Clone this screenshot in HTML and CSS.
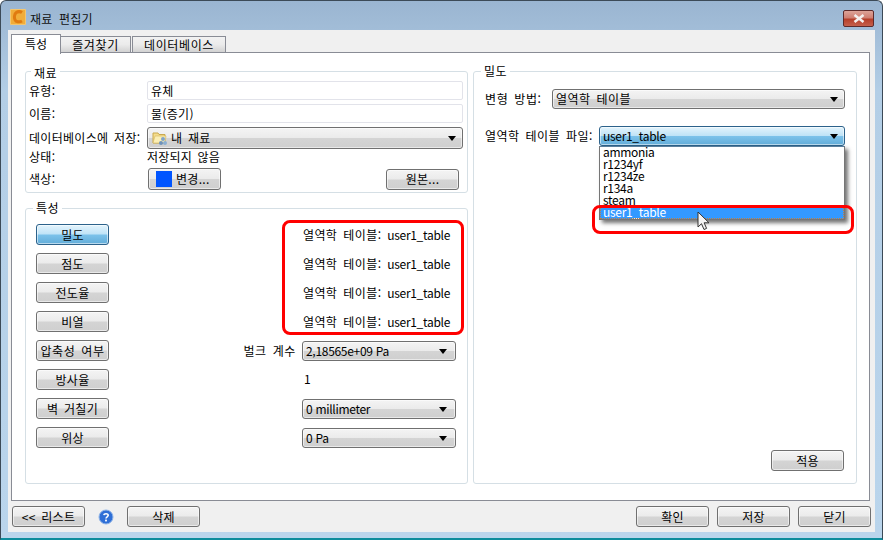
FILE: index.html
```html
<!DOCTYPE html>
<html lang="ko">
<head>
<meta charset="utf-8">
<title>재료 편집기</title>
<link rel="stylesheet" href="styles.css">
</head>
<body>
<div class="window">
  <header class="titlebar">
    <svg class="logo" width="16" height="16" viewBox="0 0 16 16"><rect width="16" height="16" rx="1" fill="#f3c56f"/><rect x="1" y="1" width="14" height="14" fill="#f0ad3a"/><path d="M12 3.6C10.5 2.6 8 2.4 6.3 3.6 4.3 5 4 8.6 5 10.8c1 2.2 4.400 2.700 7 1.200" fill="none" stroke="#e07b10" stroke-width="3"/></svg>
    <span class="title">재료 편집기</span>
    <button class="close" aria-label="닫기"><svg width="12" height="9" viewBox="0 0 12 9"><path d="M1.500 1 L10.500 8 M10.500 1 L1.500 8" stroke="#f4efee" stroke-width="2.600"/></svg></button>
  </header>
  <div class="dialog">
    <nav class="tabs">
      <span class="tab active">특성</span>
      <span class="tab t2">즐겨찾기</span>
      <span class="tab t3">데이터베이스</span>
    </nav>
    <main class="pane">
      <div class="col-left">
        <section class="group material">
          <h2 class="legend">재료</h2>
          <div class="frow"><span class="flabel">유형:</span><span class="input">유체</span></div>
          <div class="frow"><span class="flabel">이름:</span><span class="input">물(증기)</span></div>
          <div class="frow"><span class="flabel">데이터베이스에 저장:</span>
            <span class="btn select dbsel">
              <svg class="folder" width="16" height="16" viewBox="0 0 16 16"><path d="M1 3h5l1 1.500h6V13H1z" fill="#f5dc8c" stroke="#c9a94f"/><path d="M3 6h11l-1 7H1z" fill="#fbeeb4" stroke="#d2b55f" stroke-width=".6"/><circle cx="11" cy="9" r="2" fill="#7fa3c9"/><circle cx="9" cy="13" r="2" fill="#6f93bb"/><circle cx="13" cy="13" r="2" fill="#8bafd3"/></svg>
              <span class="grow">내 재료</span><i class="arrow"></i></span></div>
          <div class="frow status"><span class="flabel">상태:</span><span class="statustext">저장되지 않음</span></div>
          <div class="frow colorrow"><span class="flabel">색상:</span>
            <span class="btn colorbtn"><i class="swatch"></i>변경...</span>
            <span class="btn b73 origin">원본...</span></div>
        </section>
        <section class="group props">
          <h2 class="legend">특성</h2>
          <div class="prow"><span class="btn b73 on">밀도</span><span class="val">열역학 테이블: <span class="lat">user1_table</span></span></div>
          <div class="prow"><span class="btn b73">점도</span><span class="val">열역학 테이블: <span class="lat">user1_table</span></span></div>
          <div class="prow"><span class="btn b73">전도율</span><span class="val">열역학 테이블: <span class="lat">user1_table</span></span></div>
          <div class="prow"><span class="btn b73">비열</span><span class="val">열역학 테이블: <span class="lat">user1_table</span></span></div>
          <div class="prow"><span class="btn b73 wide">압축성 여부</span><span class="pright"><span class="plabel">벌크 계수</span><span class="btn select psel"><span class="grow lat">2,18565e+09 Pa</span><i class="arrow"></i></span></span></div>
          <div class="prow"><span class="btn b73">방사율</span><span class="pone">1</span></div>
          <div class="prow"><span class="btn b73">벽 거칠기</span><span class="btn select psel"><span class="grow lat">0 millimeter</span><i class="arrow"></i></span></div>
          <div class="prow"><span class="btn b73">위상</span><span class="btn select psel"><span class="grow lat">0 Pa</span><i class="arrow"></i></span></div>
          <div class="mark mark-left"></div>
        </section>
      </div>
      <section class="group density">
        <h2 class="legend">밀도</h2>
        <div class="drow first"><span class="dlabel">변형 방법:</span><span class="btn select dsel"><span class="grow">열역학 테이블</span><i class="arrow"></i></span></div>
        <div class="drow second"><span class="dlabel">열역학 테이블 파일:</span>
          <span class="btn select on dsel tsel"><span class="grow lat">user1_table</span><i class="arrow"></i>
            <ul class="list">
              <li>ammonia</li><li>r1234yf</li><li>r1234ze</li><li>r134a</li><li>steam</li><li class="sel">user1_table</li>
            </ul>
          </span></div>
        <div class="apply"><span class="btn b73">적용</span></div>
        <div class="mark mark-right"></div>
        <svg class="cursor" width="14" height="20" viewBox="0 0 14 20"><path d="M1 1v15l3.500-3.300 2.500 5.800 2.600-1.100-2.500-5.600H12z" fill="#f4f4f4" stroke="#333" stroke-width="1"/></svg>
      </section>
    </main>
    <footer class="footer">
      <span class="btn b73">&lt;&lt; 리스트</span>
      <svg class="help" width="16" height="16" viewBox="0 0 16 16"><circle cx="8" cy="8" r="7" fill="#2f6fd6" stroke="#8fb4e8"/><path d="M5.800 6.200C6 4.400 10.200 4.200 10.200 6.300 10.200 7.800 8 7.800 8 9.500" fill="none" stroke="#fff" stroke-width="1.600"/><rect x="7.100" y="10.600" width="1.800" height="1.800" fill="#fff"/></svg>
      <span class="btn b73">삭제</span>
      <span class="spacer"></span>
      <span class="btn b73">확인</span>
      <span class="btn b73">저장</span>
      <span class="btn b73">닫기</span>
    </footer>
  </div>
</div>
</body>
</html>
```
FILE: styles.css
```css
* { box-sizing: border-box; }
html, body { margin: 0; padding: 0; background: #fff; }
body { width: 883px; height: 540px; overflow: hidden; font: 12px/14px "Noto Sans CJK KR", "Liberation Sans", sans-serif; color: #000; word-spacing: 2px; }
.window { width: 883px; height: 540px; display: flex; flex-direction: column; background: linear-gradient(#9ab5d1, #b3cee6 90px, #bad5ec); border: 1px solid #3c4a57; border-bottom: 2px solid #0d8c9c; border-radius: 6px 6px 0 0; padding: 0 7px 6px 7px; }
.titlebar { height: 29px; display: flex; align-items: center; flex: none; }
.logo { margin: 3px 0 0 2px; }
.title { margin-left: 4px; letter-spacing: .2px; font-size: 12px; word-spacing: 3px; color: #111; margin-top: 6px; }
.close { margin-left: auto; margin-right: 1px; margin-top: 6px; width: 31px; height: 17px; padding: 0; border: 1px solid #5d2a2a; border-radius: 2px; background: linear-gradient(#dda398, #cf7f72 45%, #b63f2a 55%, #c5604c); display: flex; align-items: center; justify-content: center; }
.dialog { flex: 1; background: #f0f0f0; display: flex; flex-direction: column; padding: 4px 5px 5px 3px; min-height: 0; }
.tabs { display: flex; height: 18px; flex: none; position: relative; z-index: 1; }
.tab { height: 17px; margin-top: 2px; padding: 0 4px; line-height: 15px; text-align: center; border: 1px solid #898c95; background: linear-gradient(#f2f2f2, #ebebeb 50%, #d2d2d2); margin-left: 1px; font-size: 12px; letter-spacing: .6px; }
.tab.active { height: 20px; margin-top: 0; background: #fff; border-bottom: none; width: 50px; line-height: 17px; margin-left: 0; letter-spacing: 0; }
.t2 { width: 70px; border-left: none; margin-left: 0; }
.t3 { width: 94px; }
.pane { flex: 1; min-height: 0; background: #fff; border: 1px solid #898c95; padding: 18px 12px 16px 13px; display: flex; gap: 5px; }
.col-left { width: 443px; display: flex; flex-direction: column; gap: 15px; }
.group { border: 1px solid #d5dfe5; border-radius: 3px; position: relative; display: flex; flex-direction: column; }
.legend { margin: -9px 0 0 2px; padding: 0 3px; height: 16px; font: inherit; line-height: 16px; align-self: flex-start; background: #fff; letter-spacing: .5px; }
.material { height: 122px; padding: 2px 4px 0 3px; }
.frow { display: flex; align-items: center; margin-bottom: 4px; }
.flabel { width: 118px; flex: none; white-space: nowrap; letter-spacing: .3px; }
.input { flex: 1; height: 19px; border: 1px solid #e2e3ea; border-radius: 2px; padding-left: 3px; line-height: 17px; letter-spacing: .3px; }
.btn { display: inline-flex; align-items: center; justify-content: center; height: 21px; border: 1px solid #707070; border-radius: 3px; background: linear-gradient(#f4f4f4, #ebebeb 48%, #d4d4d4 52%, #cfcfcf); box-shadow: inset 0 0 0 1px rgba(255,255,255,.55); white-space: nowrap; flex: none; letter-spacing: .3px; }
.b73 { width: 73px; }
.wide { letter-spacing: .6px; }
.btn.on { background: linear-gradient(#e4f4fc, #bfe3f7 48%, #7cc2ea 52%, #63add9); border-color: #2c628b; }
.select { justify-content: flex-start; padding: 0 6px 0 3px; }
.grow { flex: 1; }
.lat { letter-spacing: -.3px; word-spacing: 0; }
.arrow { width: 0; height: 0; border-left: 4px solid transparent; border-right: 4px solid transparent; border-top: 5px solid #000; margin-top: 1px; }
.dbsel { flex: 1; height: 22px; padding-left: 4px; }
.folder { margin-right: 3px; }
.status { height: 14px; margin: -3px 0 4px; }
.statustext { margin-left: 0; letter-spacing: .2px; }
.colorrow { margin: 0; }
.colorbtn { width: 73px; height: 22px; margin-left: 1px; padding-left: 7px; justify-content: flex-start; }
.swatch { width: 16px; height: 16px; background: #0055ff; margin-right: 4px; }
.origin { margin-left: auto; margin-right: 4px; }
.props { height: 276px; padding-left: 10px; padding-right: 11px; }
.prow { display: flex; align-items: center; justify-content: space-between; height: 21px; margin-bottom: 8px; }
.props .legend { margin-left: -3px; margin-bottom: 8px; }
.val { padding-right: 6px; letter-spacing: .45px; word-spacing: 2px; }
.pright { display: flex; align-items: center; gap: 6px; }
.plabel { letter-spacing: .6px; }
.psel { width: 154px; padding-right: 8px; padding-left: 3px; height: 20px; }
.pone { width: 154px; padding-left: 2px; margin-top: -2px; }
.density { flex: 1; padding: 0 11px 12px 11px; }
.density .legend { margin-left: -4px; }
.drow { display: flex; align-items: center; height: 20px; margin-top: 2px; }
.drow.first { margin-top: 10px; }
.drow .dlabel { flex: none; width: 67px; white-space: nowrap; letter-spacing: .6px; }
.dsel { flex: 1; height: 20px; letter-spacing: .5px; }
.second { margin-top: 17px; }
.second .dlabel { width: 114px; letter-spacing: .5px; }
.tsel { position: relative; }
.list { position: absolute; z-index: 3; left: -1px; right: -1px; top: 19px; height: 74px; margin: 0; padding: 0; list-style: none; background: #fff; border: 1px solid #767676; border-top: 1px solid #5a7f9c; box-shadow: 3px 3px 4px rgba(0,0,0,.55); letter-spacing: -.3px; }
.list li { height: 12px; line-height: 10px; padding-left: 3px; }
.list .sel { background: #3399ff; color: #fff; outline: 1px dotted #c08040; outline-offset: -1px; }
.apply { margin-top: auto; display: flex; justify-content: flex-end; padding-right: 1px; }
.mark { position: absolute; z-index: 5; border: 3px solid #f00; border-radius: 8px; pointer-events: none; }
.mark-left { left: 256px; top: 11px; width: 182px; height: 115px; }
.mark-right { left: 118px; top: 133px; width: 262px; height: 29px; }
.cursor { position: absolute; z-index: 6; left: 223px; top: 139px; }
.footer { flex: none; display: flex; align-items: center; padding: 5px 0 0 1px; margin-right: -1px; height: 26px; }
.footer .btn + .btn { margin-left: 8px; }
.help { margin: 0 13px 0 13px; }
.spacer { flex: 1; }
```
